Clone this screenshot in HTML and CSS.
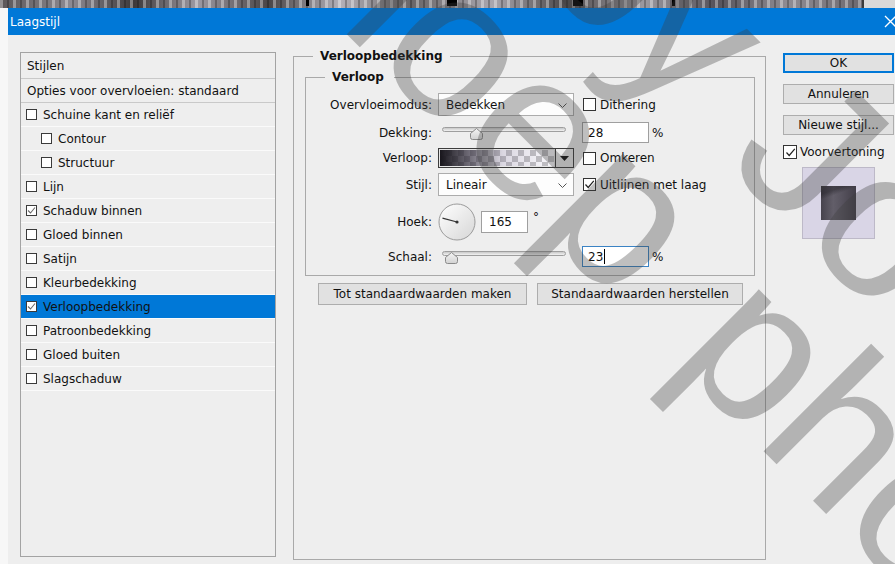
FILE: index.html
```html
<!DOCTYPE html>
<html lang="nl">
<head>
<meta charset="utf-8">
<title>Laagstijl</title>
<link rel="stylesheet" href="styles.css">
</head>
<body>
<div class="backdrop"></div>

<div class="dialog">
  <header class="titlebar">
    <span class="title">Laagstijl</span>
    <svg class="close" width="13" height="13" viewBox="0 0 13 13"><path d="M1 1L12 12M12 1L1 12" stroke="#fff" stroke-width="1.3" fill="none"/></svg>
  </header>

  <div class="content">
    <ul class="styles">
      <li class="head">Stijlen</li>
      <li class="head">Opties voor overvloeien: standaard</li>
      <li><span class="cb"></span>Schuine kant en reliëf</li>
      <li class="sub"><span class="cb"></span>Contour</li>
      <li class="sub"><span class="cb"></span>Structuur</li>
      <li><span class="cb"></span>Lijn</li>
      <li><span class="cb"><svg viewBox="0 0 9 9"><path d="M1 4.5L3.5 7L8 1.5" stroke="#6a6a6a" stroke-width="1.1" fill="none"/></svg></span>Schaduw binnen</li>
      <li><span class="cb"></span>Gloed binnen</li>
      <li><span class="cb"></span>Satijn</li>
      <li><span class="cb"></span>Kleurbedekking</li>
      <li class="sel"><span class="cb"><svg viewBox="0 0 9 9"><path d="M1 4.5L3.5 7L8 1.5" stroke="#6a6a6a" stroke-width="1.1" fill="none"/></svg></span>Verloopbedekking</li>
      <li><span class="cb"></span>Patroonbedekking</li>
      <li><span class="cb"></span>Gloed buiten</li>
      <li><span class="cb"></span>Slagschaduw</li>
    </ul>

    <fieldset class="group outer">
      <legend>Verloopbedekking</legend>
      <fieldset class="group inner">
        <legend>Verloop</legend>

        <div class="frow r1">
          <span class="lbl">Overvloeimodus:</span>
          <div class="select">Bedekken<svg class="chev" width="9" height="5" viewBox="0 0 9 5"><path d="M0.5 0.5L4.5 4.5L8.5 0.5" stroke="#555" fill="none"/></svg></div>
          <span class="opt"><span class="box"></span>Dithering</span>
        </div>

        <div class="frow r2">
          <span class="lbl">Dekking:</span>
          <div class="slider">
            <div class="track"></div>
            <svg class="thumb" style="left:32px" width="13" height="12" viewBox="0 0 13 12"><path d="M0.5 5.5L6.5 0.5L12.5 5.5V9.5Q12.5 11.5 10.5 11.5H2.5Q0.5 11.5 0.5 9.5Z" fill="url(#thumbfill)" stroke="#8a8a8a"/></svg>
          </div>
          <div class="field wide">28</div><span class="unit">%</span>
        </div>

        <div class="frow r3">
          <span class="lbl">Verloop:</span>
          <div class="gradient"><div class="ramp"></div><div class="drop"><svg width="9" height="5" viewBox="0 0 9 5"><path d="M0 0H9L4.5 5Z" fill="#111"/></svg></div></div>
          <span class="opt"><span class="box"></span>Omkeren</span>
        </div>

        <div class="frow r4">
          <span class="lbl">Stijl:</span>
          <div class="select">Lineair<svg class="chev" width="9" height="5" viewBox="0 0 9 5"><path d="M0.5 0.5L4.5 4.5L8.5 0.5" stroke="#555" fill="none"/></svg></div>
          <span class="opt"><span class="box"><svg viewBox="0 0 11 11"><path d="M1.5 5.5L4.2 8.5L9.8 1.8" stroke="#222" stroke-width="1.2" fill="none"/></svg></span>Uitlijnen met laag</span>
        </div>

        <div class="frow r5">
          <span class="lbl">Hoek:</span>
          <svg class="dial" width="38" height="38" viewBox="0 0 38 38">
            <defs>
              <linearGradient id="dialfill" x1="0" y1="0" x2="1" y2="1">
                <stop offset="0" stop-color="#ffffff"/>
                <stop offset="1" stop-color="#d6d6d6"/>
              </linearGradient>
            </defs>
            <circle cx="19" cy="19" r="18" fill="url(#dialfill)" stroke="#9b9b9b"/>
            <path d="M19 19L4.5 15.1" stroke="#333" stroke-width="1.2"/>
            <circle cx="19" cy="19" r="1.6" fill="#333"/>
          </svg>
          <div class="field angle">165</div><span class="deg">°</span>
        </div>

        <div class="frow r6">
          <span class="lbl">Schaal:</span>
          <div class="slider">
            <div class="track"></div>
            <svg class="thumb" style="left:7px" width="13" height="12" viewBox="0 0 13 12"><path d="M0.5 5.5L6.5 0.5L12.5 5.5V9.5Q12.5 11.5 10.5 11.5H2.5Q0.5 11.5 0.5 9.5Z" fill="url(#thumbfill)" stroke="#8a8a8a"/></svg>
          </div>
          <div class="field wide focus">23<span class="caret"></span></div><span class="unit">%</span>
        </div>
      </fieldset>

      <div class="actions">
        <div class="btn">Tot standaardwaarden maken</div>
        <div class="btn">Standaardwaarden herstellen</div>
      </div>
    </fieldset>

    <aside class="side">
      <div class="btn default">OK</div>
      <div class="btn">Annuleren</div>
      <div class="btn">Nieuwe stijl...</div>
      <span class="opt preview-toggle"><span class="box"><svg viewBox="0 0 11 11"><path d="M1.5 5.5L4.2 8.5L9.8 1.8" stroke="#222" stroke-width="1.2" fill="none"/></svg></span>Voorvertoning</span>
      <div class="preview"><div class="swatch"></div></div>
    </aside>
  </div>
</div>

<div class="watermark" aria-hidden="true">
  <span class="wm-line wm-upper">by Joep</span>
  <span class="wm-line wm-lower">loep photo</span>
</div>

<svg class="defs" width="0" height="0">
  <defs>
    <linearGradient id="thumbfill" x1="0" y1="0" x2="0" y2="1">
      <stop offset="0" stop-color="#f4f4f4"/>
      <stop offset="1" stop-color="#d2d2d2"/>
    </linearGradient>
  </defs>
</svg>
</body>
</html>
```

FILE: styles.css
```css
* { box-sizing: border-box; }

html, body {
  margin: 0;
  padding: 0;
}

body {
  width: 895px;
  height: 564px;
  overflow: hidden;
  position: relative;
  background: #f7f7f7;
  font-family: "DejaVu Sans", "Liberation Sans", sans-serif;
  font-size: 12px;
  color: #111;
}

/* strip of the photo canvas peeking above the dialog */
.backdrop {
  height: 8px;
  background:
    linear-gradient(90deg, transparent 0 862px, #3a3a3a 862px 864px, #d9d9d9 864px),
    linear-gradient(90deg, transparent 306px, #000 306px 309px, transparent 309px 447px, #000 447px 457px, transparent 457px 573px, #000 573px 583px, transparent 583px 672px, #000 672px 675px, transparent 675px),
    repeating-linear-gradient(90deg, rgba(255,255,255,0.35) 0 3px, transparent 3px 7px, rgba(0,0,0,0.25) 7px 9px, transparent 9px 13px),
    linear-gradient(90deg, #5b5657 0, #8d8a92 8%, #3d393a 15%, #9e9aa3 22%, #4a4546 30%, #b3b0b8 38%, #6a6668 46%, #a9a6ae 55%, #4f4b4c 63%, #9c99a0 72%, #56525a 80%, #8f8c93 88%, #6e6a70 96%);
  background-size: 100% 100%, 100% 6px, auto, auto;
  background-repeat: no-repeat, no-repeat, repeat, no-repeat;
}

.dialog {
  margin-left: 8px;
  height: 556px;
  background: #eeeeee;
  display: flex;
  flex-direction: column;
}

.titlebar {
  height: 27px;
  flex: none;
  background: #0078d7;
  color: #fff;
  display: flex;
  align-items: center;
  justify-content: space-between;
  padding-left: 2px;
}
.title { font-size: 12px; }
.close { margin-right: -2px; }

.content {
  display: flex;
  align-items: flex-start;
  padding: 17px 0 0 12px;
}

/* effect list */
.styles {
  list-style: none;
  margin: 0;
  padding: 0;
  width: 256px;
  height: 505px;
  flex: none;
  border: 1px solid #a3a3a3;
}
.styles li {
  height: 24px;
  display: flex;
  align-items: center;
  padding-left: 5px;
  border-bottom: 1px solid #fafafa;
  white-space: nowrap;
}
.styles li.head {
  padding-left: 6px;
  border-bottom-color: #c9c9c9;
}
.styles li.head:first-child { height: 26px; }
.styles li.sub { padding-left: 20px; }
.styles li.sel { background: #0078d7; }

.cb {
  width: 11px;
  height: 11px;
  flex: none;
  margin-right: 6px;
  border: 1px solid #3a3a3a;
  background: #fff;
  display: flex;
  align-items: center;
  justify-content: center;
}
.cb svg { width: 9px; height: 9px; }

/* group boxes */
.group {
  margin: 0;
  border: 1px solid #a9a9a9;
  min-width: 0;
}
.group > legend {
  font-weight: bold;
  line-height: 14px;
  color: #111;
}

.outer {
  width: 473px;
  height: 511px;
  margin: -3px 0 0 17px;
  padding: 0 10px 0 11px;
  flex: none;
}
.outer > legend {
  padding: 0 7px;
  margin-left: 8px;
}

.inner {
  margin-top: 7px;
  padding: 9px 0 8px 0;
}
.inner > legend {
  padding: 0 10px 0 7px;
  margin-left: 19px;
}

.frow {
  display: flex;
  align-items: center;
  margin-bottom: 6px;
}
.frow.r1 { height: 23px; }
.frow.r2 { height: 21px; margin-bottom: 5px; }
.frow.r3 { height: 20px; margin-bottom: 5px; }
.frow.r4 { height: 23px; margin-bottom: 7px; }
.frow.r5 { height: 37px; }
.frow.r6 { height: 21px; margin-bottom: 0; }

.lbl {
  width: 126px;
  margin-right: 6px;
  text-align: right;
  flex: none;
}

.select {
  width: 136px;
  height: 23px;
  flex: none;
  border: 1px solid #acacac;
  background: #fdfdfd;
  display: flex;
  align-items: center;
  justify-content: space-between;
  padding: 0 6px 0 7px;
}
.chev { margin-top: 1px; }

.opt {
  display: flex;
  align-items: center;
  white-space: nowrap;
}
.frow .opt { margin-left: 9px; }
.box {
  width: 13px;
  height: 13px;
  flex: none;
  margin-right: 4px;
  border: 1px solid #333;
  background: #fff;
  display: flex;
  align-items: center;
  justify-content: center;
}
.box svg { width: 11px; height: 11px; }

.slider {
  width: 136px;
  height: 21px;
  flex: none;
  position: relative;
}
.track {
  margin: 5px 0 0 4px;
  width: 124px;
  height: 5px;
  border: 1px solid #9e9e9e;
  border-radius: 3px;
  background: linear-gradient(#c8c8c8, #f2f2f2);
}
.thumb {
  position: absolute;
  top: 6px;
}

.field {
  height: 21px;
  border: 1px solid #9f9f9f;
  background: #fff;
  display: flex;
  align-items: center;
  padding-left: 5px;
  flex: none;
}
.field.wide { width: 67px; margin-left: 8px; }
.field.angle { width: 47px; height: 22px; margin-left: 5px; padding-left: 7px; }
.field.focus { border-color: #3b83c4; }
.caret {
  width: 1px;
  height: 15px;
  background: #000;
  margin-left: 1px;
}
.unit { margin-left: 3px; }
.deg { margin-left: 5px; margin-top: -9px; }

.gradient {
  width: 136px;
  height: 20px;
  flex: none;
  border: 1px solid #3c3c3c;
  display: flex;
  background: #e6e6e6;
}
.ramp {
  flex: 1;
  margin: 1px;
  background:
    linear-gradient(90deg, rgba(24,22,28,1) 0%, rgba(60,55,70,0.75) 25%, rgba(150,140,170,0.35) 55%, rgba(220,214,236,0.15) 100%),
    repeating-conic-gradient(#bdbdbd 0 25%, #ffffff 0 50%) 0 0 / 12px 12px;
}
.drop {
  width: 18px;
  border-left: 1px solid #3c3c3c;
  display: flex;
  align-items: center;
  justify-content: center;
  background: #ececec;
}

.dial { flex: none; }

/* buttons */
.btn {
  height: 22px;
  border: 1px solid #adadad;
  background: #e1e1e1;
  display: flex;
  align-items: center;
  justify-content: center;
  white-space: nowrap;
  flex: none;
}

.actions {
  display: flex;
  gap: 10px;
  margin: 7px 0 0 13px;
}
.actions .btn:first-child { width: 209px; }
.actions .btn:last-child { width: 206px; }

.side {
  width: 111px;
  flex: none;
  margin: 1px 0 0 17px;
  display: flex;
  flex-direction: column;
}
.side .btn {
  height: 20px;
  margin-bottom: 11px;
}
.side .btn.default {
  border: 2px solid #0078d7;
}
.preview-toggle .box { width: 14px; height: 14px; margin-right: 3px; }
.preview-toggle { margin-top: -1px; }

.preview {
  width: 73px;
  height: 72px;
  margin: 8px 0 0 19px;
  border: 1px solid #bdb9c8;
  background: #d9d5e6;
  display: flex;
  align-items: center;
  justify-content: center;
}
.swatch {
  width: 35px;
  height: 34px;
  background:
    linear-gradient(160deg, rgba(30,28,34,0.45) 0 18%, transparent 30%),
    linear-gradient(90deg, #47434d 0%, #625e69 35%, #57535e 60%, #423e48 100%);
}

/* diagonal copyright watermark laid over the whole capture */
.watermark {
  position: absolute;
  inset: 0;
  overflow: hidden;
  pointer-events: none;
}
.wm-line {
  position: absolute;
  font-family: "Liberation Sans", sans-serif;
  font-size: 210px;
  line-height: 210px;
  white-space: nowrap;
  color: rgba(60, 60, 60, 0.33);
  transform-origin: 0 178px;
  transform: rotate(45deg);
}
.wm-lower { left: 336px; top: -153px; word-spacing: 17px; }
.wm-upper { left: 525px; top: -213px; }

.defs { position: absolute; }
```
